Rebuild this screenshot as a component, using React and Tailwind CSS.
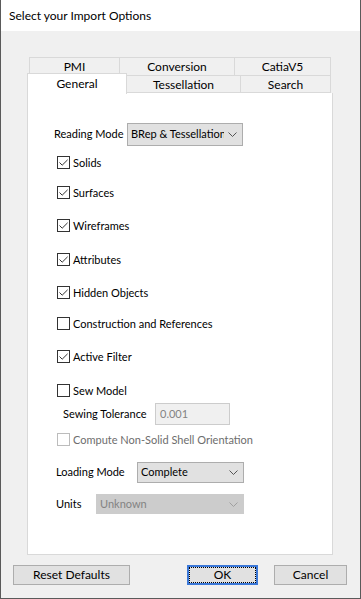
import React from "react"

function Check({ checked, disabled }) {
    return (
        <span className={`flex h-[13px] w-[13px] shrink-0 items-center justify-center border bg-white ${disabled ? "border-[#bcbcbc]" : "border-[#333333]"}`}>
            {checked && (
                <svg width="11" height="11" viewBox="0 0 11 11">
                    <path d="M1.5 5.5 L4.2 8.2 L9.6 2.8" fill="none" stroke="#333333" strokeWidth="1" />
                </svg>
            )}
        </span>
    )
}

function CheckRow({ label, checked, disabled, className }) {
    return (
        <div className={`flex h-[13px] items-center gap-[3px] whitespace-nowrap pl-[29px] ${className}`}>
            <Check checked={checked} disabled={disabled} />
            <span className={`leading-none ${disabled ? "text-[#6d6d6d]" : "text-black"}`}>{label}</span>
        </div>
    )
}

function Chevron({ color = "#555555" }) {
    return (
        <svg width="9" height="5" viewBox="0 0 9 5" className="shrink-0">
            <path d="M0.5 0.5 L4.5 4.5 L8.5 0.5" fill="none" stroke={color} strokeWidth="1" />
        </svg>
    )
}

function Select({ value, className, disabled }) {
    return (
        <div className={`flex shrink-0 items-center justify-between gap-[4px] overflow-hidden border pl-[3px] pr-[5px] ${disabled ? "border-[#cccccc] bg-[#cccccc] text-[#838383]" : "border-[#adadad] bg-[#e1e1e1] text-black"} ${className}`}>
            <span className="min-w-0 overflow-hidden whitespace-nowrap">{value}</span>
            <Chevron color={disabled ? "#a0a0a0" : "#555555"} />
        </div>
    )
}

export default function App() {
    return (
        <div className="flex h-[599px] w-[361px] flex-col border-x border-b border-[#5a5a5a] bg-[#f0f0f0] text-[11px] text-black" style={{ fontFamily: "Lato, 'Noto Sans', sans-serif" }}>
            {/* Title bar */}
            <div className="flex h-[31px] items-center bg-white pl-[8px] text-[12px]">
                Select your Import Options
            </div>

            {/* Tabs */}
            <div className="mt-[26px] flex flex-col pl-[26px] text-[12px]">
                <div className="ml-[2px] flex h-[18px]">
                    <div className="flex w-[91px] items-center justify-center border border-b-0 border-[#d9d9d9]">PMI</div>
                    <div className="flex w-[115px] items-center justify-center border border-b-0 border-l-0 border-[#d9d9d9]">Conversion</div>
                    <div className="flex w-[96px] items-center justify-center border border-b-0 border-l-0 border-[#d9d9d9]">CatiaV5</div>
                </div>
                <div className="relative flex h-[18px]">
                    <div className="relative z-10 -mt-[2px] flex h-[21px] w-[100px] items-start justify-center border border-b-0 border-[#d9d9d9] bg-white pt-[1px]">General</div>
                    <div className="flex w-[114px] items-center justify-center border border-l-0 border-[#d9d9d9] pt-[1px]">Tessellation</div>
                    <div className="flex w-[90px] items-center justify-center border border-l-0 border-[#d9d9d9] pt-[1px]">Search</div>
                </div>

                {/* Panel */}
                <div className="flex h-[462px] w-[306px] flex-col border border-t-0 border-[#d9d9d9] bg-white text-[11px]">
                    <div className="mt-[30px] flex h-[23px] items-center">
                        <span className="w-[99px] shrink-0 whitespace-nowrap pl-[26px]">Reading Mode</span>
                        <Select value="BRep & Tessellation" className="h-[23px] w-[116px]" />
                    </div>
                    <CheckRow label="Solids" checked className="mt-[10px]" />
                    <CheckRow label="Surfaces" checked className="mt-[17px]" />
                    <CheckRow label="Wireframes" checked className="mt-[20px]" />
                    <CheckRow label="Attributes" checked className="mt-[21px]" />
                    <CheckRow label="Hidden Objects" checked className="mt-[20px]" />
                    <CheckRow label="Construction and References" className="mt-[18px]" />
                    <CheckRow label="Active Filter" checked className="mt-[20px]" />
                    <CheckRow label="Sew Model" className="mt-[21px]" />
                    <div className="mt-[6px] flex h-[22px] items-center">
                        <span className="w-[127px] shrink-0 whitespace-nowrap pl-[35px]">Sewing Tolerance</span>
                        <div className="flex h-[22px] w-[75px] items-center border border-[#cccccc] bg-[#f0f0f0] pl-[4px] text-[#838383]">0.001</div>
                    </div>
                    <CheckRow label="Compute Non-Solid Shell Orientation" disabled className="mt-[8px]" />
                    <div className="mt-[16px] flex h-[21px] items-center">
                        <span className="w-[109px] shrink-0 whitespace-nowrap pl-[28px]">Loading Mode</span>
                        <Select value="Complete" className="h-[21px] w-[107px]" />
                    </div>
                    <div className="mt-[11px] flex h-[20px] items-center">
                        <span className="w-[68px] shrink-0 whitespace-nowrap pl-[28px]">Units</span>
                        <Select value="Unknown" disabled className="h-[20px] w-[148px]" />
                    </div>
                </div>
            </div>

            {/* Buttons */}
            <div className="mt-[10px] flex h-[20px] items-stretch pl-[12px] text-[12px]">
                <button className="w-[117px] border border-[#adadad] bg-[#e1e1e1]">Reset Defaults</button>
                <button className="ml-[57px] w-[71px] border-2 border-[#3b78d8] bg-[#e1e1e1] p-0">
                    <span className="flex h-full w-full items-center justify-center border border-dotted border-black">OK</span>
                </button>
                <button className="ml-[16px] w-[73px] border border-[#adadad] bg-[#e1e1e1]">Cancel</button>
            </div>
        </div>
    )
}
